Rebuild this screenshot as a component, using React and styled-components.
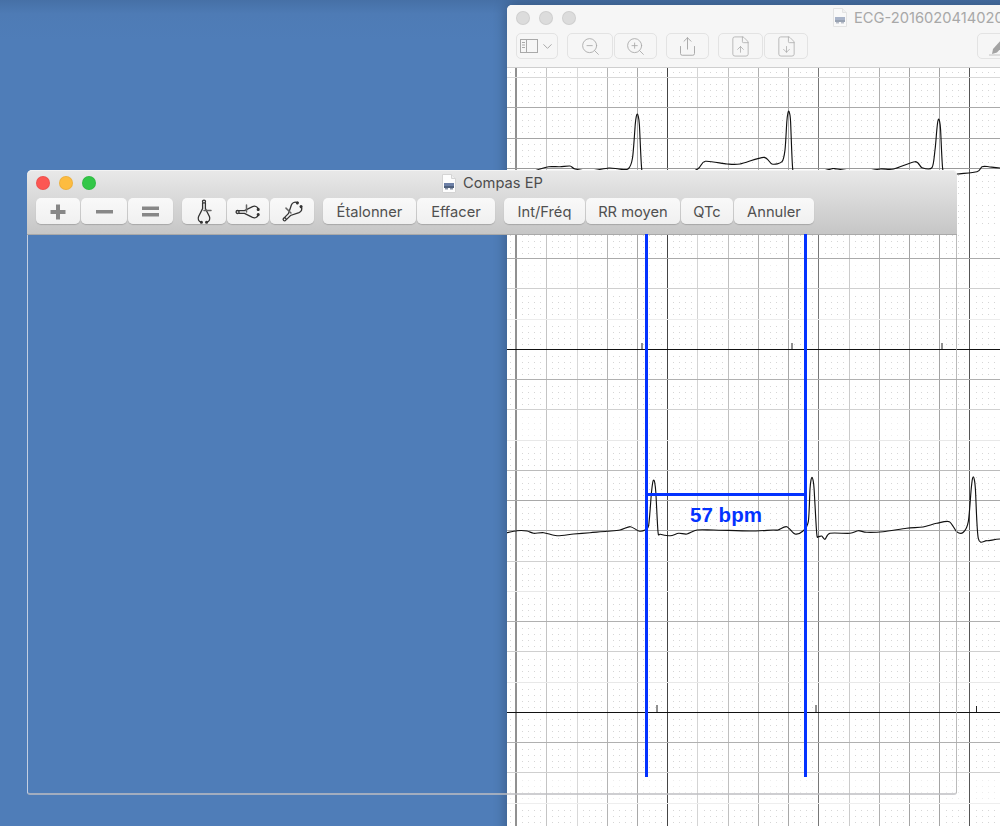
import React from 'react';
import styled, { createGlobalStyle } from 'styled-components';
import { ZoomIn, ZoomOut, Share, FileUp, FileDown, ChevronDown } from 'lucide-react';

const GlobalStyle = createGlobalStyle`
  html, body {
    margin: 0;
    padding: 0;
    background: #4f7db8;
    font-family: Inter, "Liberation Sans", sans-serif;
  }
`;

const Desktop = styled.div`
  position: relative;
  width: 1000px;
  height: 826px;
  overflow: hidden;
  background: linear-gradient(#4670a6 0, #4e7bb5 14px, #4f7db8 40px);
`;

/* fenetre du PDF, derriere */
const PdfWindow = styled.div`
  position: absolute;
  left: 507px;
  top: 5px;
  width: 523px;
  height: 860px;
  display: flex;
  flex-direction: column;
  border-radius: 5px 5px 0 0;
  background: #fff;
  box-shadow: 0 0 14px rgba(0, 0, 0, 0.32);
`;

const PdfHeader = styled.div`
  height: 63px;
  box-sizing: border-box;
  background: #f6f6f6;
  border-radius: 5px 5px 0 0;
  border-bottom: 1px solid #cfcfcf;
`;

const TitleRow = styled.div`
  height: 28px;
  display: flex;
  align-items: center;
  padding: 0 0 3px 9px;
  box-sizing: border-box;
`;

const Lights = styled.div`
  display: flex;
  gap: 9px;
`;

const Light = styled.span`
  width: 14px;
  height: 14px;
  border-radius: 50%;
  box-sizing: border-box;
  background: ${(p) => p.$color};
  border: 1px solid rgba(0, 0, 0, 0.06);
`;

const Title = styled.div`
  display: flex;
  align-items: center;
  gap: 6px;
  font-size: 14.7px;
  white-space: nowrap;
  color: ${(p) => p.$color};
  margin-left: ${(p) => p.$left}px;
`;

const ToolRow = styled.div`
  display: flex;
  gap: 9px;
  padding: 0 9px;
  height: 26px;
`;

const Group = styled.div`
  display: flex;
  gap: 1px;
  margin-left: ${(p) => (p.$push ? 'auto' : '0')};
`;

const PdfButton = styled.div`
  width: ${(p) => p.$w}px;
  box-sizing: border-box;
  display: flex;
  align-items: center;
  justify-content: center;
  gap: 2px;
  border: 1px solid #e3e3e3;
  border-radius: 5px;
  background: #f6f6f6;
  color: #a9a9a9;
`;

const OverlayWindow = styled.div`
  position: absolute;
  left: 27px;
  top: 170px;
  width: 930px;
  height: 625px;
  display: flex;
  flex-direction: column;
`;

const OverlayHeader = styled.div`
  height: 65px;
  box-sizing: border-box;
  border-radius: 5px 5px 0 0;
  border-bottom: 1px solid #a9a9a9;
  background: linear-gradient(#e9e9e9, #d9d9d9 45%, #c6c6c6);
  box-shadow: inset 0 1px 0 #f3f3f3;
`;

const OverlayTitleRow = styled.div`
  height: 28px;
  padding: 0 9px 2px;
  box-sizing: border-box;
  display: grid;
  grid-template-columns: 1fr auto 1fr;
  align-items: center;
`;

const ToolButton = styled.button`
  width: ${(p) => p.$w}px;
  padding: 1px 0 0;
  display: flex;
  align-items: center;
  justify-content: center;
  font-family: Inter, "Liberation Sans", sans-serif;
  font-size: 14.7px;
  color: #505050;
  border: none;
  border-radius: 5px;
  background: linear-gradient(#f9f9f9, #f0f0f0);
  box-shadow: 0 1px 1px rgba(0, 0, 0, 0.18);
`;

const OverlayBody = styled.div`
  position: relative;
  flex: 1;
  box-sizing: border-box;
  border-left: 1px solid rgba(235, 235, 240, 0.75);
  border-right: 1px solid rgba(170, 170, 170, 0.8);
  border-bottom: 2px solid rgba(190, 190, 195, 0.75);
  border-radius: 0 0 3px 3px;
`;

const Caliper = styled.div`
  position: absolute;
  left: 617px;
  top: -1px;
  width: 156px;
  height: 543px;
  border-left: 3px solid #0433ff;
  border-right: 3px solid #0433ff;
`;

const CaliperBar = styled.div`
  position: absolute;
  left: 0;
  right: 0;
  top: 259px;
  height: 3px;
  background: #0433ff;
`;

const CaliperLabel = styled.div`
  position: absolute;
  left: 0;
  right: 0;
  top: 269px;
  text-align: center;
  font-family: "Liberation Sans", Arial, sans-serif;
  font-weight: bold;
  font-size: 20.5px;
  line-height: 24px;
  color: #0433ff;
`;

const ChartSvg = styled.svg`
  display: block;
  flex: none;
`;

// courbe lissee a partir des points releves
const smooth = (pts) => {
  let d = `M${pts[0][0]} ${pts[0][1]}`;
  for (let i = 0; i < pts.length - 1; i++) {
    const p0 = pts[i - 1] || pts[i];
    const p1 = pts[i];
    const p2 = pts[i + 1];
    const p3 = pts[i + 2] || p2;
    const k = 0.14;
    const c1x = p1[0] + (p2[0] - p0[0]) * k;
    const c1y = p1[1] + (p2[1] - p0[1]) * k;
    const c2x = p2[0] - (p3[0] - p1[0]) * k;
    const c2y = p2[1] - (p3[1] - p1[1]) * k;
    d += `C${c1x.toFixed(1)} ${c1y.toFixed(1)} ${c2x.toFixed(1)} ${c2y.toFixed(1)} ${p2[0]} ${p2[1]}`;
  }
  return d;
};

const TRACE_TOP = [
  [507, 172], [530, 172], [540, 169], [548.7, 166.7], [560, 166.7], [570, 166], [575, 169],
  [590, 171], [608.7, 168], [618.7, 169], [628, 169], [632.5, 158], [635.2, 125], [636.4, 116], [637.3, 114], [638.2, 116], [639.4, 125], [641.7, 169], [645, 176],
  [680, 176], [697.7, 169], [705.3, 161.3], [727, 164], [740, 164], [763.7, 157.3], [772, 164], [782, 161.7],
  [785, 150], [786.8, 122], [787.9, 113], [788.7, 111], [789.5, 113], [790.6, 122], [792.7, 169], [796, 176], [820, 172], [832, 168.7], [837, 169], [860, 172],
  [880, 169], [893.7, 169], [915, 161.7], [922, 167.7], [932, 167.7], [935, 150], [936.8, 130], [937.9, 121], [938.7, 119], [939.5, 121], [940.6, 130], [942.7, 169],
  [946, 176], [957, 174], [977, 171.7], [982, 166.7], [988.7, 166.7], [1000, 168], [1030, 168],
];

const TRACE_BOTTOM = [
  [507, 532.7], [517, 530.7], [527, 531], [533.7, 533.3], [543.7, 532.7], [557, 535.7], [573.7, 534],
  [590, 532.7], [607, 531.3], [620, 530], [630.3, 526.7], [638.7, 531], [645, 530], [648.7, 525],
  [651.5, 492], [652.8, 482], [653.7, 480], [654.6, 482], [655.8, 492], [658, 531.7], [660.3, 534.3], [670.3, 535.7], [678.7, 533.3], [687, 534], [697, 530],
  [713.7, 530], [750, 531], [773, 530], [778, 530], [786.7, 526.7], [795, 534], [803, 531], [808.3, 521.7],
  [810, 489], [811.1, 479.5], [812, 477.3], [812.9, 479.5], [814.1, 489], [816.7, 533.3], [818.3, 536.7], [821.7, 536], [825, 539.3], [830, 533.3], [850, 533.3],
  [858.3, 530.7], [866.7, 532.3], [883, 531.7], [906.7, 528.3], [923, 527], [936.7, 523.3], [949.3, 521.7],
  [956.7, 531.7], [963.3, 532.3], [968.3, 521.7], [971.2, 489], [972.4, 479], [973.3, 476.7], [974.2, 479], [975.4, 489], [978.3, 538.3], [986.7, 540.7], [1000, 539], [1030, 538],
];

const V_LINES = [
  ['#222', 516], ['#c4c4c4', 546.5], ['#d8d8d8', 577.5], ['#b4b4b4', 607.5], ['#a8a8a8', 637.5],
  ['#444', 667.5], ['#d4d4d4', 697.5], ['#c0c0c0', 728.5], ['#b0b0b0', 758.5], ['#a8a8a8', 788.5],
  ['#777', 818.5], ['#cbcbcb', 849.5], ['#b0b0b0', 879.5], ['#a4a4a4', 909.5], ['#a4a4a4', 939.5],
  ['#555', 969.5],
];

const H_LINES = [
  ['#d8d8d8', 77.5], ['#aaa', 107.5], ['#a4a4a4', 138.5], ['#999', 168.5], ['#aaa', 258.5], ['#cfcfcf', 288.5],
  ['#ececec', 319.5], ['#111', 349.5], ['#b0b0b0', 379.5], ['#d0d0d0', 409.5], ['#e8e8e8', 440.5], ['#bbb', 470.5],
  ['#a8a8a8', 500.5], ['#aaa', 530.5], ['#d0d0d0', 561.5], ['#e8e8e8', 591.5], ['#b0b0b0', 621.5], ['#cfcfcf', 651.5],
  ['#e8e8e8', 682.5], ['#111', 712.5], ['#b0b0b0', 742.5], ['#cfcfcf', 772.5], ['#eee', 803.5],
];

const TICKS = [[642, 343, 349], [792, 343, 349], [942, 343, 349], [657, 705, 712], [816, 705, 712], [976.5, 706, 712]];

// les bandes ou les points sont presque effaces
const FAINT_BANDS = [[258, 288], [410, 440], [772, 803]];

const dotPaths = () => {
  let strong = '';
  let faint = '';
  for (let row = 0; row < 130; row++) {
    if (row % 5 === 0) continue;
    const y = Math.round(47.5 + row * 6.05);
    if (y < 68 || y > 826) continue;
    const isFaint = FAINT_BANDS.some(([a, b]) => y > a && y < b);
    for (let col = -1; col < 85; col++) {
      if (col % 5 === 0) continue;
      const x = Math.round(516 + col * 6.05);
      if (isFaint) faint += `M${x} ${y}h1v1h-1z`;
      else strong += `M${x} ${y}h1v1h-1z`;
    }
  }
  return { strong, faint };
};

const DOTS = dotPaths();

const EcgPage = () => (
  <ChartSvg width="523" height="797" viewBox="507 68 523 797">
    <rect x="507" y="68" width="523" height="797" fill="#fff" />
    <path d={DOTS.strong} fill="#d6d6d6" shapeRendering="crispEdges" />
    <path d={DOTS.faint} fill="#ededed" shapeRendering="crispEdges" />
    {V_LINES.map(([color, x]) => (
      <line key={x} x1={x} x2={x} y1="68" y2="826" stroke={color} strokeWidth="1" />
    ))}
    {H_LINES.map(([color, y]) => (
      <line key={y} x1="507" x2="1030" y1={y} y2={y} stroke={color} strokeWidth="1" />
    ))}
    {TICKS.map(([x, y1, y2]) => (
      <line key={x} x1={x} x2={x} y1={y1} y2={y2} stroke="#222" strokeWidth="1" />
    ))}
    <path d={smooth(TRACE_TOP)} fill="none" stroke="#111" strokeWidth="1.15" strokeLinejoin="round" />
    <path d={smooth(TRACE_BOTTOM)} fill="none" stroke="#111" strokeWidth="1.15" strokeLinejoin="round" />
  </ChartSvg>
);

const DocIcon = ({ faded }) => (
  <svg width="16" height="19" viewBox="0 0 16 19" style={{ opacity: faded ? 0.55 : 1 }}>
    <path d="M1.5 .5H10.5L14.5 4.5V18.5H1.5Z" fill="#fdfdfd" stroke="#d4d4d4" />
    <path d="M10.5 .5V4.5H14.5" fill="#eee" stroke="#d4d4d4" />
    <rect x="3" y="9" width="10" height="3" fill="#6c7fa6" />
    <rect x="3" y="12" width="10" height="2" fill="#4d5f7c" />
    <rect x="4" y="14" width="3" height="1.5" fill="#8892a6" />
    <rect x="9" y="14" width="3" height="1.5" fill="#8892a6" />
  </svg>
);

const SidebarIcon = () => (
  <svg width="18" height="14" viewBox="0 0 18 14" fill="none" stroke="#a9a9a9">
    <rect x=".5" y=".5" width="17" height="13" />
    <path d="M6.5 .5V13.5M2 3.5H5M2 6H5M2 8.5H5" />
  </svg>
);

const PenIcon = () => (
  <svg width="24" height="20" viewBox="0 0 24 20" fill="#a3a3a3">
    <path d="M6 13L16 2L20 5.5L10 16.5L5 18Z" />
    <rect x="2" y="18.5" width="20" height="1" fill="#c4c4c4" />
  </svg>
);

const GlyphSvg = styled.svg`
  display: block;
  fill: #878787;
`;

const PlusGlyph = () => (
  <GlyphSvg width="16" height="16" viewBox="0 0 16 16">
    <rect x="0.5" y="6" width="15" height="4" />
    <rect x="6" y="0.5" width="4" height="15" />
  </GlyphSvg>
);

const MinusGlyph = () => (
  <GlyphSvg width="17" height="16" viewBox="0 0 17 16">
    <rect x="0" y="6" width="17" height="3.5" />
  </GlyphSvg>
);

const EqualsGlyph = () => (
  <GlyphSvg width="17" height="16" viewBox="0 0 17 16">
    <rect x="0" y="2.5" width="17" height="3.5" />
    <rect x="0" y="9" width="17" height="3.5" />
  </GlyphSvg>
);

// le meme compas, tourne selon le bouton
const CaliperIcon = ({ angle }) => (
  <svg width="26" height="26" viewBox="0 0 26 26" fill="none" strokeLinecap="round">
    <g transform={`rotate(${angle} 13 13)`} stroke="#333" strokeWidth="1.3">
      <circle cx="13" cy="2.6" r="1.5" />
      <path d="M11.6 4V9.5L7.6 17.5C6.6 20 7.6 22.4 10 23.2" />
      <path d="M14.4 4V9.5L18.4 17.5C19.4 20 18.4 22.4 16 23.2" />
      <path d="M13 11.5H20" stroke="#666" strokeWidth="1.5" />
      <circle cx="10.4" cy="23.2" r="0.9" fill="#333" />
      <circle cx="15.6" cy="23.2" r="0.9" fill="#333" />
    </g>
  </svg>
);

const App = () => (
  <>
    <GlobalStyle />
    <Desktop>
      <PdfWindow>
        <PdfHeader>
          <TitleRow>
            <Lights>
              <Light $color="#dcdcdc" />
              <Light $color="#dcdcdc" />
              <Light $color="#dcdcdc" />
            </Lights>
            <Title $color="#a8a8a8" $left={256}>
              <DocIcon faded />
              ECG-20160204140203.pdf
            </Title>
          </TitleRow>
          <ToolRow>
            <Group>
              <PdfButton $w={42}>
                <SidebarIcon />
                <ChevronDown size={15} strokeWidth={1.6} />
              </PdfButton>
            </Group>
            <Group>
              <PdfButton $w={46}>
                <ZoomOut size={21} strokeWidth={1} />
              </PdfButton>
              <PdfButton $w={43}>
                <ZoomIn size={21} strokeWidth={1} />
              </PdfButton>
            </Group>
            <Group>
              <PdfButton $w={43}>
                <Share size={21} strokeWidth={1.1} />
              </PdfButton>
            </Group>
            <Group>
              <PdfButton $w={45}>
                <FileUp size={23} strokeWidth={0.8} />
              </PdfButton>
              <PdfButton $w={44}>
                <FileDown size={23} strokeWidth={0.8} />
              </PdfButton>
            </Group>
            <Group $push>
              <PdfButton $w={44}>
                <PenIcon />
              </PdfButton>
            </Group>
          </ToolRow>
        </PdfHeader>
        <EcgPage />
      </PdfWindow>

      <OverlayWindow>
        <OverlayHeader>
          <OverlayTitleRow>
            <Lights>
              <Light $color="#fc5753" />
              <Light $color="#fdbc40" />
              <Light $color="#33c748" />
            </Lights>
            <Title $color="#4d4d4d" $left={0}>
              <DocIcon />
              Compas EP
            </Title>
          </OverlayTitleRow>
          <ToolRow>
            <Group>
              <ToolButton $w={44}><PlusGlyph /></ToolButton>
              <ToolButton $w={46}><MinusGlyph /></ToolButton>
              <ToolButton $w={45}><EqualsGlyph /></ToolButton>
            </Group>
            <Group>
              <ToolButton $w={44}><CaliperIcon angle={0} /></ToolButton>
              <ToolButton $w={42}><CaliperIcon angle={-90} /></ToolButton>
              <ToolButton $w={44}><CaliperIcon angle={225} /></ToolButton>
            </Group>
            <Group>
              <ToolButton $w={93}>Étalonner</ToolButton>
              <ToolButton $w={78}>Effacer</ToolButton>
            </Group>
            <Group>
              <ToolButton $w={81}>Int/Fréq</ToolButton>
              <ToolButton $w={94}>RR moyen</ToolButton>
              <ToolButton $w={52}>QTc</ToolButton>
              <ToolButton $w={80}>Annuler</ToolButton>
            </Group>
          </ToolRow>
        </OverlayHeader>
        <OverlayBody>
          <Caliper>
            <CaliperBar />
            <CaliperLabel>57 bpm</CaliperLabel>
          </Caliper>
        </OverlayBody>
      </OverlayWindow>
    </Desktop>
  </>
);

export default App;
